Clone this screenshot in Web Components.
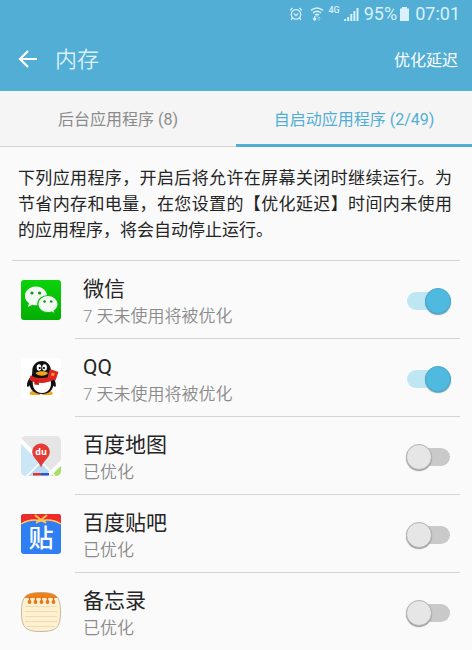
<!DOCTYPE html>
<html lang="zh-CN">
<head>
<meta charset="utf-8">
<meta name="viewport" content="width=device-width, initial-scale=1">
<title>内存</title>
<style>
	body {
		margin: 0;
		background: #fafafa;
		color: #252525;
		font-family: Roboto, 'Noto Sans CJK SC', sans-serif;
		--color-primary: #52aed5;
		--color-accent: #4fb9df;
		--color-line: #d4d4d4;
		--color-muted: #8b8b8b;
	}
</style>
</head>
<body>
<memory-page></memory-page>

<script>
class StatusBar extends HTMLElement {
	constructor() {
		super();
		this.attachShadow({ mode: 'open' });
		this.shadowRoot.innerHTML = `
			<style>
				:host {
					display: flex;
					justify-content: flex-end;
					align-items: center;
					height: 27px;
					padding: 0 12px;
					color: #d9f1fb;
					font-size: 18px;
					line-height: 27px;
				}
				svg { display: block; fill: none; stroke: currentColor; }
				.alarm { margin-right: 7px; }
				.network {
					align-self: flex-start;
					margin: 5px 4px 0 5px;
					font-size: 9px;
					font-weight: 500;
					line-height: 10px;
				}
				.battery { margin: 0 6px 0 3px; }
				.percent { margin-left: 5px; }
			</style>
			<svg class="alarm" width="14" height="14" viewBox="0 0 14 14" aria-hidden="true" stroke-width="1.2">
				<circle cx="7" cy="7.4" r="4.8"/>
				<path d="M1 3.4 3.6 1M13 3.4 10.4 1M3.6 11.2 2 13M10.4 11.2 12 13M4.6 6.4 7 8.6 9.4 6.4"/>
			</svg>
			<svg width="14" height="16" viewBox="0 0 14 16" aria-hidden="true" stroke-width="1.5">
				<path d="M1 4.4Q7-.4 13 4.4M3 6.8Q7 3.6 11 6.8M5 9Q7 7.4 9 9"/>
				<path d="M6 9.6h2L7 11z" fill="currentColor" stroke="none"/>
				<path d="M4.8 10v4M3 12.3l1.8 2 1.4-2" stroke-width="1.3"/>
				<path d="M9 15v-4M7.8 12.6 9 11l1.4 1.6" stroke-width="1" opacity=".45"/>
			</svg>
			<span class="network">4G</span>
			<svg width="15" height="14" viewBox="0 0 15 14" aria-hidden="true" stroke-width="2">
				<path d="M1.2 14v-2M4.2 14v-4M7.3 14V7M10.4 14V4M13.5 14V1"/>
			</svg>
			<span class="percent">95%</span>
			<svg class="battery" width="9" height="14" viewBox="0 0 9 14" aria-hidden="true">
				<path d="M0 1.500h2V0h5v1.500h2V14H0z" fill="currentColor" stroke="none"/>
			</svg>
			<span>07:01</span>
		`;
	}
}

class AppHeader extends HTMLElement {
	constructor() {
		super();
		this.attachShadow({ mode: 'open' });
		this.shadowRoot.innerHTML = `
			<style>
				:host {
					display: flex;
					align-items: center;
					height: 64px;
					padding: 0 14px 0 18px;
					color: #fff;
				}
				button {
					padding: 0;
					border: 0;
					background: none;
					color: inherit;
					font: inherit;
					font-size: 16px;
					cursor: pointer;
				}
				svg { display: block; }
				h1 {
					flex: 1;
					margin: 2px 0 0 17px;
					color: #dcf2fb;
					font-size: 22px;
					font-weight: 350;
					line-height: 32px;
				}
			</style>
			<button type="button" aria-label="返回">
				<svg width="20" height="20" viewBox="0 0 20 20" fill="none" stroke="currentColor" stroke-width="2.2" aria-hidden="true">
					<path d="M19 10H2.500M10 2 2 10l8 8"/>
				</svg>
			</button>
			<h1><slot></slot></h1>
			<button type="button"><slot name="action"></slot></button>
		`;
	}
}

class TabItem extends HTMLElement {
	constructor() {
		super();
		this.attachShadow({ mode: 'open' });
		this.shadowRoot.innerHTML = `
			<style>
				:host { display: flex; flex: 1; }
				button {
					flex: 1;
					box-sizing: border-box;
					height: 56px;
					padding: 0 0 2px;
					border: 0;
					border-bottom: 1px solid var(--color-line);
					background: none;
					color: var(--color-muted);
					font: inherit;
					font-size: 16px;
					cursor: pointer;
				}
				:host([selected]) button {
					padding: 0;
					border-bottom: 3px solid var(--color-primary);
					color: var(--color-primary);
				}
			</style>
			<button type="button" role="tab"><slot></slot></button>
		`;
	}
	connectedCallback() {
		this.shadowRoot
			.querySelector('button')
			.setAttribute('aria-selected', this.hasAttribute('selected'));
	}
}

const icons = {
	wechat: `
		<defs><linearGradient id="g" x2="0" y2="1"><stop stop-color="#0bd30b"/><stop offset="1" stop-color="#04ae04"/></linearGradient></defs>
		<rect width="40" height="40" rx="3" fill="url(#g)"/>
		<path d="M15 6.500C8.700 6.500 4 10.800 4 16c0 3 1.600 5.600 4 7.300L7 27l4.200-2.300c1.200.4 2.500.5 3.800.5 6.200 0 11-4.200 11-9.300S21.200 6.500 15 6.500z" fill="#f4fbf4"/>
		<path d="M27 15.500c-5.700 0-10.200 3.700-10.200 8.500s4.500 8.600 10.200 8.600c1.300 0 2.500-.2 3.600-.6L34 34l-.9-3.100c2.400-1.600 4-4 4-6.900 0-4.800-4.500-8.500-10.100-8.500z" fill="#f4fbf4" stroke="#08c108" stroke-width="1.200"/>
		<g fill="#1b8f1b"><circle cx="11" cy="13" r="1.600"/><circle cx="18.600" cy="13" r="1.600"/><circle cx="23.600" cy="21.500" r="1.300"/><circle cx="30.200" cy="21.500" r="1.300"/></g>`,
	qq: `
		<rect width="40" height="40" rx="4" fill="#fff"/>
		<path d="M11 33c-3 1-3.500 3.800 0 4h8v-4zM29 33c3.500 1 4 3.800 0 4h-8v-4z" fill="#f3a51c"/>
		<path d="M10 18c-2.500 3-4.500 7-4 10 .4 1.600 2 .8 3-1zM31 18c2.500 3 4.300 7 3.800 10-.4 1.600-2 .8-3-1z" fill="#111"/>
		<path d="M21 3c-6 0-9.700 4.500-9.700 10 0 3-.5 4.500-1.500 7C6 28.500 11 36 21 36c9.500 0 14-7.500 10-16-1-2.500-1-4-1-7 0-5.500-3.500-10-9-10z" fill="#111"/>
		<path d="M12 22c-1.500 7 2.500 13 9 13s10.500-6 8.500-13z" fill="#fff"/>
		<path d="M9.500 17.500C16 21 26 21 32 17l1 4.500C26 26 15 26 8.500 22z" fill="#d8241e"/>
		<path d="M13 22h4.500l.5 5-4.500-.5z" fill="#c91915"/>
		<path d="M29 11l8.500 3-3 8.500-8-3z" fill="#dc2820"/><path d="M31 14.500l2.800 1-1.200 2.800-2.600-1z" fill="#f09a3c"/>
		<ellipse cx="18" cy="9.500" rx="2.300" ry="3.200" fill="#fff"/><ellipse cx="23.600" cy="9.500" rx="2.300" ry="3.200" fill="#fff"/>
		<circle cx="18.700" cy="10" r="1.100"/><circle cx="23" cy="10" r="1.100"/>
		<path d="M14.500 15c3-2.500 10-2.500 12.500 0-2 3.500-10 3.500-12.500 0z" fill="#f5a61d"/>`,
	map: `
		<clipPath id="c"><rect width="40" height="40" rx="5"/></clipPath>
		<g clip-path="url(#c)">
			<rect width="40" height="40" fill="#e5e5e5"/>
			<path d="M0 5l21 21-14 14H0z" fill="#cbe7f6"/>
			<path d="M20 26l14 14H7z" fill="#b9def3"/>
			<path d="M29 40l11-11v11z" fill="#a7de63"/>
			<path d="M-2 3l23 23M42 25 27 40" stroke="#fff" stroke-width="4"/>
			<path d="M20 26l14 14M20 26 5 41" stroke="#fff" stroke-width="1.500"/>
		</g>
		<path d="M20 7.500c-5 0-8.800 3.700-8.800 8.500C11.200 22 18 25 20 31.500 22 25 28.800 22 28.800 16c0-4.800-3.800-8.500-8.800-8.500z" fill="#e53b36"/>
		<text x="20" y="19" text-anchor="middle" font-family="Open Sans" font-size="9" font-weight="700" fill="#fff">du</text>
		<path d="M12 37h8v2.500h-8z" fill="#e3352f"/><path d="M20 37h8v2.500h-8z" fill="#2854dc"/>`,
	tieba: `
		<rect width="40" height="40" rx="3" fill="#2f7ff2"/>
		<path d="M0 10V3a3 3 0 0 1 3-3h34a3 3 0 0 1 3 3v7C33 7 26 6 20 8 14 6 7 7 0 10z" fill="#ee2b2b"/>
		<path d="M0 10C8 5 16 5 24 8M40 10C32 5 24 5 16 8" fill="none" stroke="#f7cf72" stroke-width="1.400"/>
		<path d="M14 1l6 5 6-5M20 5l-5 4M20 5l5 4" fill="none" stroke="#ffc44f" stroke-width="2"/>
		<text x="20" y="33" text-anchor="middle" font-family="Noto Sans CJK SC" font-size="25" font-weight="500" fill="#fff">贴</text>`,
	memo: `
		<clipPath id="c"><path d="M20 .5C35 .5 39.500 4 39.500 20S35 39.500 20 39.500.5 36 .5 20 5 .5 20 .5z"/></clipPath>
		<g clip-path="url(#c)">
			<rect width="40" height="40" fill="#fff0cf"/>
			<rect width="40" height="6" fill="#f08018"/>
			<path d="M4 14.500h32M4 19.500h32M4 24.500h32M4 29.500h32M6 34.500h28" stroke="#ebdcb9"/>
		</g>
		<path d="M8.500 5v4M14.500 5v4M20.500 5v4M26.500 5v4M32.500 5v4" stroke="#d96f16" stroke-width="1.400"/>
		<g fill="#e87519"><circle cx="8.500" cy="10" r="1.900"/><circle cx="14.500" cy="10" r="1.900"/><circle cx="20.500" cy="10" r="1.900"/><circle cx="26.500" cy="10" r="1.900"/><circle cx="32.500" cy="10" r="1.900"/></g>
		<path d="M20 .5C35 .5 39.500 4 39.500 20S35 39.500 20 39.500.5 36 .5 20 5 .5 20 .5z" fill="none" stroke="#b7a68c" stroke-width=".8"/>`,
};

class AppIcon extends HTMLElement {
	constructor() {
		super();
		this.attachShadow({ mode: 'open' });
	}
	connectedCallback() {
		this.shadowRoot.innerHTML = `
			<style>
				:host { display: block; }
				svg { display: block; overflow: visible; }
			</style>
			<svg width="40" height="40" viewBox="0 0 40 40" aria-hidden="true">${icons[this.getAttribute('name')]}</svg>
		`;
	}
}

class AppRow extends HTMLElement {
	constructor() {
		super();
		this.attachShadow({ mode: 'open' });
		this.shadowRoot.innerHTML = `
			<style>
				:host {
					display: flex;
					padding: 0 12px 0 21px;
				}
				.icon { padding: 19px 14px 0 0; }
				.body {
					flex: 1;
					display: flex;
					align-items: center;
					box-sizing: border-box;
					height: 78px;
					padding: 0 10px 0 8px;
					border-bottom: 1px solid var(--color-line);
				}
				:host(:last-of-type) .body { border-bottom-color: transparent; }
				label { flex: 1; padding-top: 4px; }
				.name {
					display: block;
					font-size: 21px;
					line-height: 28px;
				}
				.note {
					display: block;
					color: var(--color-muted);
					font-size: 17px;
					font-weight: 350;
					line-height: 26px;
				}
				input {
					appearance: none;
					display: flex;
					align-items: center;
					width: 43px;
					height: 18px;
					margin: 2px 0 0;
					border-radius: 9px;
					background: #c9c9c9;
					cursor: pointer;
				}
				input::before {
					content: '';
					box-sizing: border-box;
					width: 26px;
					height: 26px;
					margin-left: -1px;
					border: 1px solid #b4b4b4;
					border-radius: 50%;
					background: #e6e6e6;
					box-shadow: 0 1px 1px #999;
				}
				input:checked {
					justify-content: flex-end;
					background: #bfe6f3;
				}
				input:checked::before {
					margin-right: -1px;
					border-color: #48a9cb;
					background: var(--color-accent);
					box-shadow: 0 1px 1px #6d9fb3;
				}
			</style>
			<div class="icon"><slot name="icon"></slot></div>
			<div class="body">
				<label for="toggle">
					<span class="name"><slot></slot></span>
					<span class="note"><slot name="note"></slot></span>
				</label>
				<input id="toggle" type="checkbox" role="switch">
			</div>
		`;
	}
	connectedCallback() {
		this.shadowRoot.querySelector('input').checked = this.hasAttribute('checked');
	}
}

class MemoryPage extends HTMLElement {
	constructor() {
		super();
		this.attachShadow({ mode: 'open' });
		this.shadowRoot.innerHTML = `
			<style>
				:host { display: block; }
				header { background: var(--color-primary); }
				nav {
					display: flex;
					background: #f5f5f5;
				}
				p {
					margin: 0;
					padding: 18px 20px 17px 18px;
					font-size: 17px;
					line-height: 26px;
					text-align: justify;
				}
				hr {
					height: 1px;
					margin: 0 12px;
					border: 0;
					background: var(--color-line);
				}
			</style>
			<header>
				<status-bar></status-bar>
				<app-header>内存<span slot="action">优化延迟</span></app-header>
			</header>
			<nav role="tablist">
				<tab-item>后台应用程序 (8)</tab-item>
				<tab-item selected>自启动应用程序 (2/49)</tab-item>
			</nav>
			<main>
				<p>下列应用程序&#xff0c;开启后将允许在屏幕关闭时继续运行。为节省内存和电量&#xff0c;在您设置的【优化延迟】时间内未使用的应用程序&#xff0c;将会自动停止运行。</p>
				<hr>
				<app-row checked>
					<app-icon slot="icon" name="wechat"></app-icon>微信<span slot="note">7 天未使用将被优化</span>
				</app-row>
				<app-row checked>
					<app-icon slot="icon" name="qq"></app-icon>QQ<span slot="note">7 天未使用将被优化</span>
				</app-row>
				<app-row>
					<app-icon slot="icon" name="map"></app-icon>百度地图<span slot="note">已优化</span>
				</app-row>
				<app-row>
					<app-icon slot="icon" name="tieba"></app-icon>百度贴吧<span slot="note">已优化</span>
				</app-row>
				<app-row>
					<app-icon slot="icon" name="memo"></app-icon>备忘录<span slot="note">已优化</span>
				</app-row>
			</main>
		`;
	}
}

customElements.define('status-bar', StatusBar);
customElements.define('app-header', AppHeader);
customElements.define('tab-item', TabItem);
customElements.define('app-icon', AppIcon);
customElements.define('app-row', AppRow);
customElements.define('memory-page', MemoryPage);
</script>
</body>
</html>
